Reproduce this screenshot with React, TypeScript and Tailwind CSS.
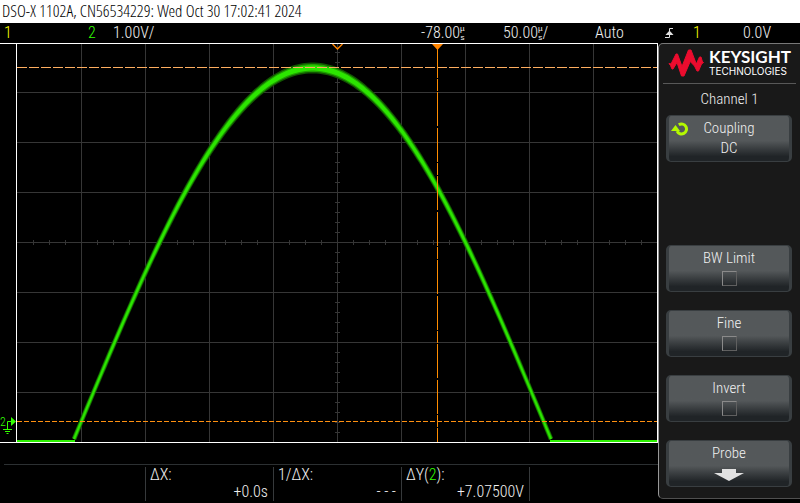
import type { ReactNode } from "react";

const GRID_W = 640;
const GRID_H = 398;
const ZERO_Y = 377;
const FLOOR_Y = 397;
const AMPLITUDE = 353;
const OMEGA = 0.0068;
const PEAK_X = 295.5;

/* The trace gets thicker where the signal is flat, as noise spreads it vertically. */
function traceBand(half: number, noise: number): string {
  const upper: string[] = [];
  const lower: string[] = [];
  for (let x = 57; x <= 534; x += 3) {
    const phase = OMEGA * (x - PEAK_X);
    const y = Math.min(ZERO_Y - AMPLITUDE * Math.cos(phase), FLOOR_Y);
    const slope = AMPLITUDE * OMEGA * Math.sin(phase);
    const len = Math.sqrt(1 + slope * slope);
    const level = (FLOOR_Y - y) / (FLOOR_Y - 24);
    const h = half + (noise * level * level) / len;
    const dx = (-slope / len) * h;
    const dy = h / len;
    upper.push(`${(x + dx).toFixed(1)},${(y + dy).toFixed(1)}`);
    lower.unshift(`${(x - dx).toFixed(1)},${(y - dy).toFixed(1)}`);
  }
  return [...upper, ...lower].join(" ");
}

function Graticule() {
  const cols = Array.from({ length: 9 }, (_, i) => 64 + i * 64);
  const rows = Array.from({ length: 7 }, (_, i) => 48 + i * 50);
  const xTicks = Array.from({ length: 39 }, (_, i) => 16 + i * 16);
  const yTicks = Array.from({ length: 39 }, (_, i) => 8 + i * 10);
  return (
    <g fill="#363636">
      {cols.map((x) => (
        <rect key={x} x={x} y={0} width={1} height={GRID_H} />
      ))}
      {rows.map((y) => (
        <rect key={y} x={0} y={y} width={GRID_W} height={1} />
      ))}
      {xTicks.map((x) => (
        <rect key={x} x={x} y={196} width={1} height={5} />
      ))}
      {yTicks.map((y) => (
        <rect key={y} x={318} y={y} width={5} height={1} />
      ))}
    </g>
  );
}

function Plot() {
  return (
    <svg
      viewBox={`0 0 ${GRID_W} ${GRID_H}`}
      preserveAspectRatio="none"
      className="block h-[398px] w-full"
      role="img"
      aria-label="Channel 2 waveform"
    >
      <Graticule />
      <polygon points={traceBand(2.4, 3)} fill="#115500" />
      <polygon points={traceBand(1.7, 2.2)} fill="#1fa000" />
      <polygon points={traceBand(1, 1.6)} fill="#2ce600" />
      <rect x={0} y={396} width={58} height={2} fill="#2cf000" />
      <rect x={533} y={396} width={107} height={2} fill="#2cf000" />
      <path d="M0 23.5H640" stroke="#ffae60" strokeDasharray="10 2" />
      <path d="M0 377.5H640" stroke="#ff9010" strokeDasharray="5 2" />
      <path d="M420.5 0V398" stroke="#ff8c00" strokeDasharray="34 1 12 1 34 2" />
      <path d="M415 0H426L420.5 6Z" fill="#ff8400" />
      <path d="M315.5 0L320.5 5L325.5 0" fill="none" stroke="#ff8400" strokeWidth={1.4} />
    </svg>
  );
}

function GroundMarker() {
  return (
    <svg viewBox="0 0 16 398" className="block h-[398px] w-4 shrink-0" role="img" aria-label="Channel 2 ground">
      <text x={0} y={382} fill="#33ff00" className="text-[12px]">
        2
      </text>
      <path d="M11 373L16 377.5L11 382Z" fill="#33ff00" />
      <path d="M12 377.5H7.5V385M3 385.5H12M5 387.5H10M6.5 389.5H8.5" fill="none" stroke="#33ff00" />
    </svg>
  );
}

function Micro() {
  return (
    <span className="inline-flex flex-col items-center font-['Liberation_Sans',sans-serif] text-[8px] leading-[9px]">
      <span>µ</span>
      <span>s</span>
    </span>
  );
}

function StatusBar() {
  return (
    <div className="grid h-5 grid-cols-[84px_25px_1fr_82px_92px_70px_28px_50px_57px] items-center pl-1 text-[16px] leading-5">
      <span className="text-[#ffff00]">1</span>
      <span className="text-[#33ff00]">2</span>
      <span>1.00V/</span>
      <span className="flex items-center">
        -78.00
        <Micro />
      </span>
      <span className="flex items-center">
        50.00
        <Micro />/
      </span>
      <span>Auto</span>
      <svg viewBox="0 0 9 12" className="h-3 w-[9px]" role="img" aria-label="Rising edge">
        <path d="M0 10.5H4.5V1.5H8" fill="none" stroke="#e2e2e2" />
        <path d="M4.5 3.5L8.5 8H0.5Z" fill="#e2e2e2" />
      </svg>
      <span className="text-[#ffff00]">1</span>
      <span>0.0V</span>
    </div>
  );
}

function Measurement({ label, value }: { label: ReactNode; value: string }) {
  return (
    <div className="flex w-32 flex-col border-l border-[#36393b] pr-[5px] pl-1">
      <dt className="h-4 leading-4">{label}</dt>
      <dd className="h-[18px] text-right leading-[18px]">{value}</dd>
    </div>
  );
}

const softKey =
  "flex h-[47px] w-full flex-col items-center rounded-[5px] border border-x-[3px] border-[#393e41] bg-linear-to-b from-[#54585a] from-55% to-[#202427] to-90% pt-[2px] text-[15px] leading-5 text-[#f0f0f0]";

function ToggleKey({ id, label }: { id: string; label: string }) {
  return (
    <label htmlFor={id} className={softKey}>
      {label}
      <input
        id={id}
        type="checkbox"
        className="mt-[3px] size-[15px] appearance-none border border-t-[#8a8a8a] border-r-[#606060] border-b-[#606060] border-l-[#8a8a8a]"
      />
    </label>
  );
}

function Brand() {
  return (
    <div className="flex h-10 gap-[5px] border-b border-[#585858] pt-1 pl-[5px]">
      <svg viewBox="0 0 36 28" className="mt-px h-7 w-9 shrink-0" role="img" aria-label="Keysight logo">
        <path
          d="M1 14.5L3 15L8 5H9.5L14 17.5L20.5 1H23L28.3 15L31.5 8H33L34.5 13L35.5 13.500L33.500 15L30.5 22H29L26.5 17L22.200 12.500L16 27H13.500L9 13.500L5 20H4L2.500 16.500Z"
          fill="#ec0c2e"
          stroke="#ec0c2e"
          strokeLinejoin="round"
        />
      </svg>
      <div className="text-white">
        <div className="font-[Lato,sans-serif] text-[17px] leading-[18px] font-bold">KEYSIGHT</div>
        <div className="font-[Inter,sans-serif] text-[10px] leading-[10px] font-normal">TECHNOLOGIES</div>
      </div>
    </div>
  );
}

function SidePanel() {
  return (
    <aside className="flex h-[456px] w-[142px] shrink-0 flex-col rounded-l-[5px] border-y border-l border-t-[#787878] border-b-[#505050] border-l-[#989898] bg-[#191919] pr-1 pl-1">
      <Brand />
      <h1 className="pt-[5px] pb-[6px] text-center text-[15px] leading-5">Channel 1</h1>
      <div className="flex flex-col gap-[18px] px-[3px] pr-1">
        <div className="mb-[65px]">
          <button type="button" className={`${softKey} relative`}>
            <svg viewBox="0 0 18 14" className="absolute top-[6px] left-[2px] h-[14px] w-[18px]" aria-hidden="true">
              <path d="M7.8 2.8A5 5 0 1 1 6 9.2" fill="none" stroke="#b4f800" strokeWidth={3} />
              <path d="M4.5 3L9 9H0Z" fill="#b4f800" />
            </svg>
            <span>Coupling</span>
            <span>DC</span>
          </button>
        </div>
        <ToggleKey id="bw-limit" label="BW Limit" />
        <ToggleKey id="fine" label="Fine" />
        <ToggleKey id="invert" label="Invert" />
        <button type="button" className={softKey}>
          <span>Probe</span>
          <svg viewBox="0 0 30 12" className="mt-[6px] h-3 w-[30px]" aria-hidden="true">
            <path d="M8 0H22V4H30L15 12L0 4H8Z" fill="#e2e2e2" />
          </svg>
        </button>
      </div>
    </aside>
  );
}

export default function App() {
  return (
    <div className="min-h-screen bg-black font-['Roboto_Condensed_Light','Roboto_Condensed','Liberation_Sans',sans-serif] text-[#f0f0f0]">
      <header className="h-[23px] bg-white pl-[2px] font-['Open_Sans_Condensed_Light','Roboto_Condensed','Liberation_Sans',sans-serif] text-[17px] leading-[22px] text-black">
        DSO-X 1102A, CN56534229: Wed Oct 30 17:02:41 2024
      </header>
      <StatusBar />
      <main className="flex">
        <div className="min-w-0 flex-1">
          <div className="flex border-y border-white">
            <GroundMarker />
            <div className="min-w-0 flex-1 border-x border-white">
              <Plot />
            </div>
          </div>
          <dl className="mt-[21px] ml-1 flex justify-end border-t border-[#2c3032] pt-[2px] text-[16px]">
            <Measurement label="ΔX:" value="+0.0s" />
            <Measurement label="1/ΔX:" value="- - -" />
            <Measurement
              label={
                <>
                  ΔY(<span className="text-[#33ff00]">2</span>):
                </>
              }
              value="+7.07500V"
            />
            <div className="w-[129px] border-l border-[#36393b]" />
          </dl>
        </div>
        <SidePanel />
      </main>
    </div>
  );
}
